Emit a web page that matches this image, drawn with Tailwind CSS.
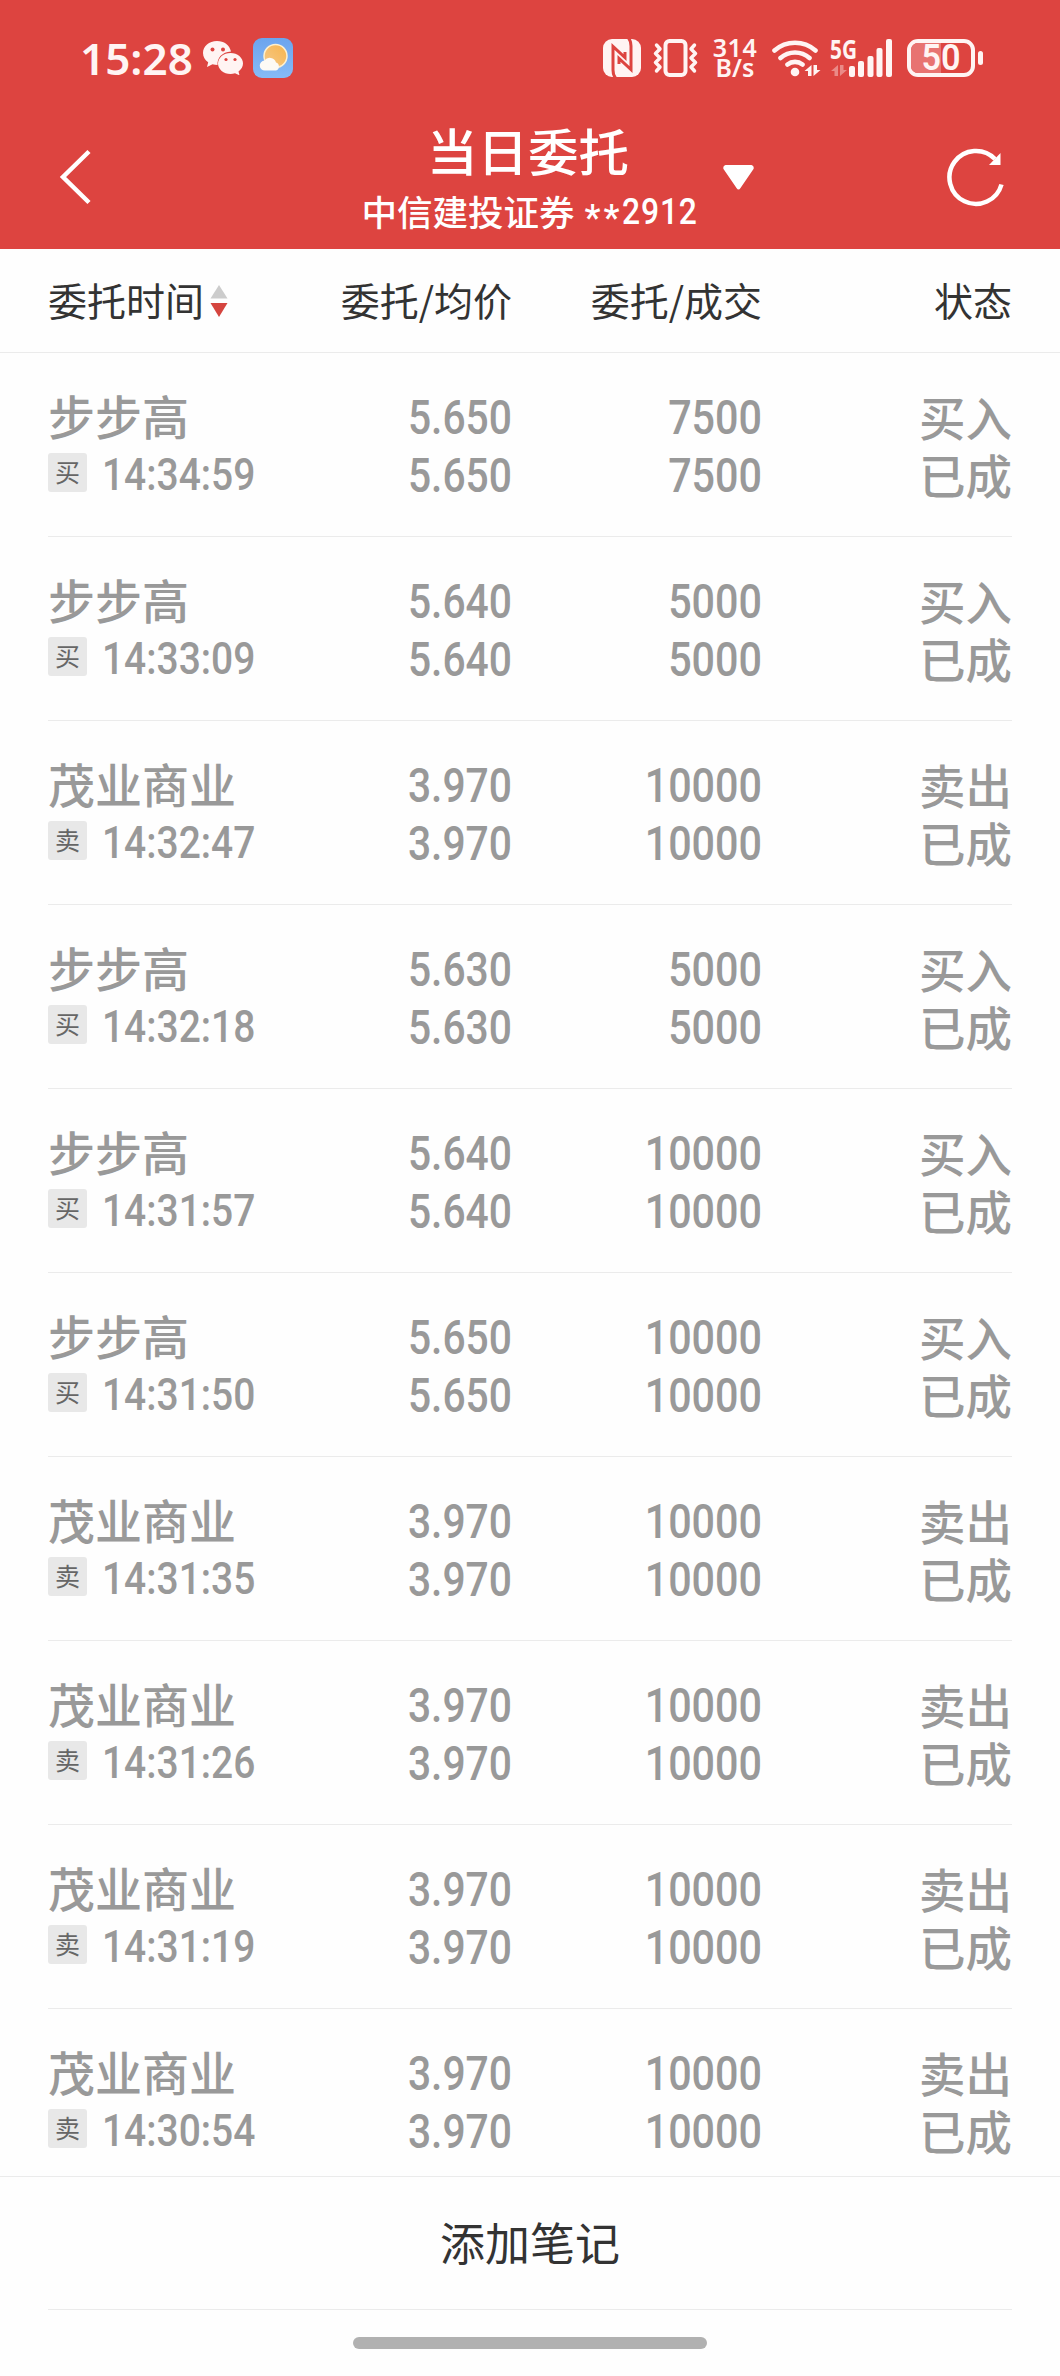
<!DOCTYPE html>
<html lang="zh-CN">
<head>
    <meta charset="UTF-8">
    <meta name="viewport" content="width=device-width, initial-scale=1.0">
    <title>当日委托</title>
    <!-- Tailwind CSS -->
    <script src="https://cdn.jsdelivr.net/npm/@tailwindcss/browser@4"></script>
</head>

<body class="bg-[#fefefe] w-[1060px] h-[2376px] overflow-hidden flex flex-col font-['Noto_Sans_CJK_SC',sans-serif] text-[#333]">

    <header class="bg-[#dd4440] h-[249px] shrink-0 text-[#fff4f3]">
        <!-- status bar -->
        <div class="h-[115px] flex items-center pl-20 pr-[77px] font-['Noto_Sans',sans-serif]">
            <span class="w-[123px] text-[44px] leading-none font-semibold">15:28</span>
            <!-- wechat -->
            <svg class="w-[40px] h-[34px]" viewBox="0 0 40 34" fill="currentColor">
                <path d="M14 0C6 0 0 5.400 0 12c0 4 2 7 5.200 9.300L4 26l5.500-2.700c1.800.5 3.300.7 5 .7C14 17 19 11 28 10.500 26.500 4 21 0 14 0z" />
                <path d="M27.500 12C20.500 12 15 16.700 15 22.500S20.500 33 27.500 33c1.600 0 3.100-.2 4.500-.7l4.500 2-1-3.800c2.700-2 4.500-4.700 4.500-8C40 16.700 34.500 12 27.500 12z" />
                <g fill="#dd4440">
                    <circle cx="9.500" cy="8.500" r="2" /><circle cx="20" cy="8.500" r="2" />
                    <circle cx="23" cy="18.500" r="1.600" /><circle cx="32" cy="18.500" r="1.600" />
                </g>
            </svg>
            <!-- weather -->
            <svg class="w-10 h-10 ml-2.5" viewBox="0 0 40 40">
                <defs>
                    <linearGradient id="sky" x1="0" y1="0" x2="0" y2="1"><stop offset="0" stop-color="#6ba4ee" /><stop offset="1" stop-color="#87bbf7" /></linearGradient>
                    <linearGradient id="sun" x1="1" y1="0" x2="0" y2="1"><stop offset="0" stop-color="#f7b44c" /><stop offset="1" stop-color="#f5c98a" /></linearGradient>
                </defs>
                <rect width="40" height="40" rx="9" fill="url(#sky)" />
                <circle cx="22.500" cy="18" r="11.500" fill="url(#sun)" stroke="#fdf0cf" stroke-width="1.500" />
                <path d="M12 32.500a5 5 0 0 1-.5-10 6.500 6.500 0 0 1 11.500 2 4.200 4.200 0 0 1 0 8z" fill="#fdfaf5" />
            </svg>

            <!-- nfc -->
            <svg class="w-[38px] h-[38px] ml-auto" viewBox="0 0 38 38">
                <rect width="38" height="38" rx="9" fill="currentColor" />
                <path d="M12.500 39q-2.500-3-2.500-8V7.500l12 11V13" fill="none" stroke="#dd4440" stroke-width="3" />
                <path d="M25.500-1q2.500 3 2.500 8v23.500l-12-11V25" fill="none" stroke="#dd4440" stroke-width="3" />
            </svg>
            <!-- vibrate -->
            <svg class="w-[46px] h-[38px] ml-[12px]" viewBox="0 0 46 38" fill="none" stroke="currentColor" stroke-width="3.500" stroke-linecap="round" stroke-linejoin="round">
                <rect x="12.500" y="2" width="20" height="34" rx="4" stroke-width="4" />
                <path d="M3.500 6l3.500 4-4.500 4.500L7 19l-4.500 4.500L7 28l-3.500 4" />
                <path d="M41.500 6L38 10l4.500 4.500L38 19l4.500 4.500L38 28l3.500 4" />
            </svg>
            <div class="w-[46px] ml-[13px] text-[25px] leading-[20px] font-semibold text-center">
                <div class="-mt-0.5 tracking-[0.5px]">314</div>
                <div>B/s</div>
            </div>
            <!-- wifi -->
            <svg class="w-[50px] h-[38px] ml-[14px]" viewBox="0 0 50 38" fill="none" stroke="currentColor" stroke-width="4.600" stroke-linecap="round">
                <path d="M2.500 11.500a31 31 0 0 1 41 0M8.500 19a22 22 0 0 1 29 0M15.500 25.500a12 12 0 0 1 15 0" />
                <circle cx="23" cy="33" r="4.300" fill="currentColor" stroke="none" />
                <path d="M39.500 26v11h-3.500v-5H32.500zM41.500 37V26H45v5h3.500z" fill="currentColor" stroke="none" />
            </svg>
            <!-- mobile signal -->
            <div class="relative w-[62px] h-[38px] ml-[8px]">
                <span class="absolute left-0 top-0 text-[26px] leading-[20px] font-bold origin-left scale-x-[0.8]">5G</span>
                <svg class="w-[62px] h-[38px]" viewBox="0 0 62 38" fill="currentColor">
                    <rect x="19" y="27" width="6" height="11" rx="2" />
                    <rect x="28" y="22" width="6" height="16" rx="2" />
                    <rect x="37.500" y="17" width="6" height="21" rx="2" />
                    <rect x="46.500" y="9" width="6" height="29" rx="2" />
                    <rect x="56" y="0" width="6" height="38" rx="2" />
                    <path opacity=".4" d="M8 26v11H4.500v-5H1zM10 37V26h3.500v5H17z" />
                </svg>
            </div>
            <!-- battery -->
            <div class="relative w-[68px] h-[38px] ml-[15px] rounded-[11px] border-4 border-current">
                <div class="absolute inset-y-0 left-0 w-[30px] rounded-l-[7px] bg-[#e87371]"></div>
                <span class="absolute inset-0 text-center font-['Roboto',sans-serif] text-[36px] leading-[31px] font-semibold scale-x-95">50</span>
            </div>
            <div class="w-[5px] h-[14px] ml-[3px] rounded-full bg-current"></div>
        </div>

        <!-- title bar -->
        <div class="h-[134px] flex items-start text-white">
            <svg class="w-[32px] h-[56px] ml-[59px] mt-[34px]" viewBox="0 0 32 56" fill="none" stroke="currentColor" stroke-width="4.500"><path d="M30 2.500L4 28l26 25.500" /></svg>
            <div class="w-[344px] ml-[266px] -mt-0.5 text-center">
                <h1 class="text-[50.500px] leading-[72px] font-medium -ml-0.5">当日委托</h1>
                <p class="flex items-center justify-center h-[51px] text-[35.500px] leading-none font-medium whitespace-nowrap">
                    中信建投证券
                    <span class="ml-2.5 pt-3.5 text-[36px] tracking-[3px] font-['Roboto',sans-serif]">**</span>
                    <span class="w-[74px] pt-0.5 text-[37px] tracking-[1px] font-['Roboto',sans-serif] origin-left scale-x-[0.86]">2912</span>
                </p>
            </div>
            <svg class="w-[31px] h-[25px] mt-[50px] ml-[22px]" viewBox="0 0 31 25" fill="currentColor"><path d="M2.500 0h26q3 1 2 4L17.500 23q-2 3-4 0L.5 4q-1-3 2-4z" /></svg>
            <!-- refresh -->
            <svg class="w-[60px] h-[60px] ml-[192px] mt-[32px]" viewBox="0 0 60 60" fill="none" stroke="currentColor" stroke-width="4.500">
                <path d="M55.500 37.500A26.500 26.500 0 1 1 49 12" />
                <path d="M54.500 6v12H43z" fill="currentColor" stroke="none" />
            </svg>
        </div>
    </header>

    <!-- table head -->
    <div class="h-[104px] shrink-0 border-b border-[#ebebeb] px-12 pb-0.5 grid grid-cols-[214px_250px_250px_250px] items-center text-[39px] leading-none text-right">
        <div class="flex items-center whitespace-nowrap">
            委托时间
            <svg class="w-[18px] h-[32px] ml-[6px] mt-0.5" viewBox="0 0 18 32"><path d="M9 0l8.500 13.500H.5z" fill="#ccc" /><path d="M9 32L.5 18h17z" fill="#d5453f" /></svg>
        </div>
        <div>委托/均价</div>
        <div>委托/成交</div>
        <div>状态</div>
    </div>

    <!-- order list, the last row runs under the bottom bar -->
    <main id="orders" class="h-[1823px] shrink-0 overflow-hidden px-12"></main>

    <footer class="flex-1 flex flex-col items-center border-t border-[#ebebeb]">
        <button class="w-[964px] h-[133px] pb-1 border-b border-[#ebebeb] text-[45px] leading-none">添加笔记</button>
        <div class="w-[354px] h-3 mt-[27px] rounded-full bg-[#b1b1b1]"></div>
    </footer>

    <script>
        // [name, side, time, price, amount]
        const orders = [
            ["步步高", "买", "14:34:59", "5.650", "7500"],
            ["步步高", "买", "14:33:09", "5.640", "5000"],
            ["茂业商业", "卖", "14:32:47", "3.970", "10000"],
            ["步步高", "买", "14:32:18", "5.630", "5000"],
            ["步步高", "买", "14:31:57", "5.640", "10000"],
            ["步步高", "买", "14:31:50", "5.650", "10000"],
            ["茂业商业", "卖", "14:31:35", "3.970", "10000"],
            ["茂业商业", "卖", "14:31:26", "3.970", "10000"],
            ["茂业商业", "卖", "14:31:19", "3.970", "10000"],
            ["茂业商业", "卖", "14:30:54", "3.970", "10000"]
        ];

        document.getElementById("orders").innerHTML = orders.map(([name, side, time, price, amount]) => `
            <div class="h-[184px] pt-9 border-b border-[#ebebeb] grid grid-cols-[214px_250px_250px_250px] items-start text-[#999] font-medium text-right">
                <div class="-mt-[3px] text-left whitespace-nowrap">
                    <div class="text-[47px] leading-[58px]">${name}</div>
                    <div class="h-[56px] flex items-center">
                        <span class="size-[39px] shrink-0 rounded-[3px] bg-[#e8e8e8] text-[#666] text-[25px] leading-[37px] text-center font-normal">${side}</span>
                        <span class="ml-[15px] mt-1 text-[45px] leading-none font-['Roboto',sans-serif] origin-left scale-x-[0.865]">${time}</span>
                    </div>
                </div>
                <div class="font-['Roboto',sans-serif] text-[48px] leading-[58px] origin-right scale-x-[0.85]">${price}<br>${price}</div>
                <div class="font-['Roboto',sans-serif] text-[48px] leading-[58px] origin-right scale-x-[0.86]">${amount}<br>${amount}</div>
                <div class="-mt-0.5 text-[46.500px] leading-[58px]">${side === "买" ? "买入" : "卖出"}<br>已成</div>
            </div>`).join("");
    </script>
</body>

</html>
